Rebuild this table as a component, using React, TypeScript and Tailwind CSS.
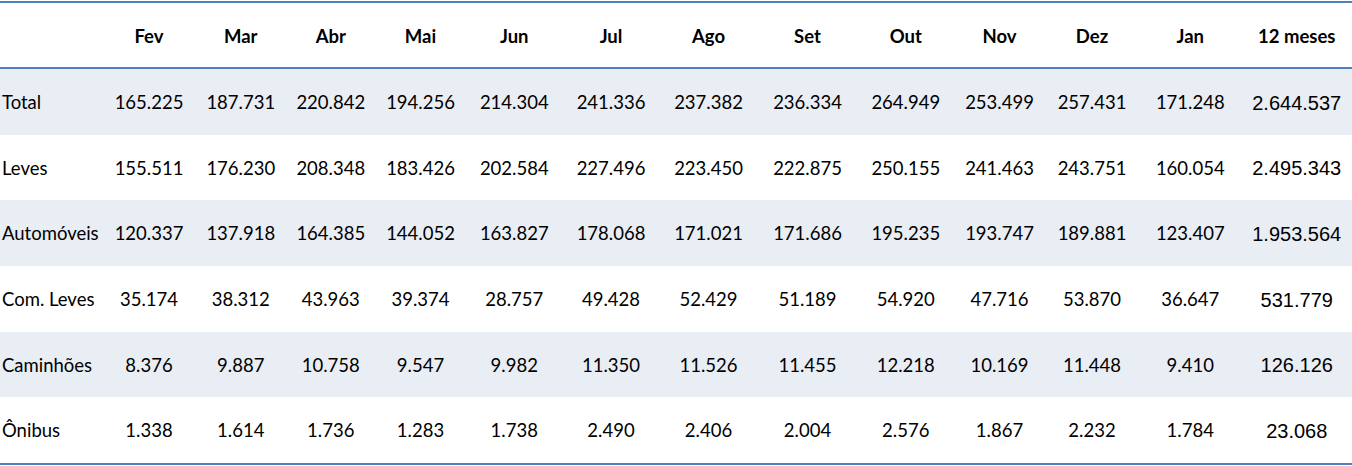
import React from "react";

const months = ["Fev", "Mar", "Abr", "Mai", "Jun", "Jul", "Ago", "Set", "Out", "Nov", "Dez", "Jan", "12 meses"];

const rows: { label: string; values: string[] }[] = [
  { label: "Total", values: ["165.225", "187.731", "220.842", "194.256", "214.304", "241.336", "237.382", "236.334", "264.949", "253.499", "257.431", "171.248", "2.644.537"] },
  { label: "Leves", values: ["155.511", "176.230", "208.348", "183.426", "202.584", "227.496", "223.450", "222.875", "250.155", "241.463", "243.751", "160.054", "2.495.343"] },
  { label: "Automóveis", values: ["120.337", "137.918", "164.385", "144.052", "163.827", "178.068", "171.021", "171.686", "195.235", "193.747", "189.881", "123.407", "1.953.564"] },
  { label: "Com. Leves", values: ["35.174", "38.312", "43.963", "39.374", "28.757", "49.428", "52.429", "51.189", "54.920", "47.716", "53.870", "36.647", "531.779"] },
  { label: "Caminhões", values: ["8.376", "9.887", "10.758", "9.547", "9.982", "11.350", "11.526", "11.455", "12.218", "10.169", "11.448", "9.410", "126.126"] },
  { label: "Ônibus", values: ["1.338", "1.614", "1.736", "1.283", "1.738", "2.490", "2.406", "2.004", "2.576", "1.867", "2.232", "1.784", "23.068"] },
];

const cols =
  "grid grid-cols-[103px_92px_91.5px_88.5px_91px_96.5px_97px_98px_100px_96.5px_91px_94px_102.5px_110.5px]";

export default function App() {
  return (
    <div className="w-[1352px] h-[466px] bg-white pt-px text-black font-['Lato','Open_Sans',sans-serif]">
      <div className="border-t-2 border-[#4f81bd]">
        <div className={`${cols} h-[66px] pt-[4px] items-center border-b-2 border-[#4f81bd] font-bold text-[18.5px]`}>
          <div />
          {months.map((m) => (
            <div key={m} className="text-center">
              {m}
            </div>
          ))}
        </div>
        {rows.map((r, i) => (
          <div
            key={r.label}
            className={`${cols} h-[65.67px] pt-[2px] items-center text-[18.5px] ${i % 2 === 0 ? "bg-[#e9edf4]" : "bg-white"}`}
          >
            <div className="pl-[2px] whitespace-nowrap">{r.label}</div>
            {r.values.map((v, j) => (
              <div
                key={j}
                className={`text-center whitespace-nowrap ${j === 12 ? "font-['Liberation_Sans',Arial,sans-serif] text-[20px]" : ""}`}
              >
                {v}
              </div>
            ))}
          </div>
        ))}
        <div className="border-t-2 border-[#4f81bd]" />
      </div>
    </div>
  );
}
